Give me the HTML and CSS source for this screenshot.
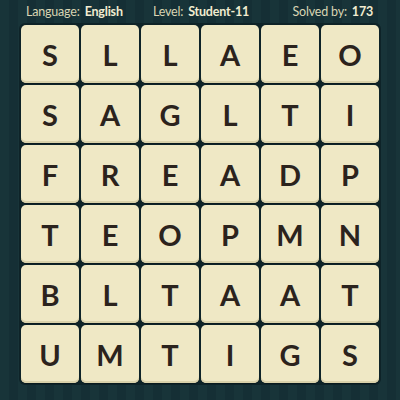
FILE: index.html
```html
<!DOCTYPE html>
<html>
<head>
<meta charset="utf-8">
<link rel="stylesheet" href="styles.css">
</head>
<body>
<div class="page">
  <div class="header">
    <div class="info lang">Language: <b>English</b></div>
    <div class="info level">Level: <b>Student-11</b></div>
    <div class="info solved">Solved by: <b>173</b></div>
  </div>
  <div class="board">
    <div class="tile">S</div><div class="tile">L</div><div class="tile">L</div><div class="tile">A</div><div class="tile">E</div><div class="tile">O</div>
    <div class="tile">S</div><div class="tile">A</div><div class="tile">G</div><div class="tile">L</div><div class="tile">T</div><div class="tile">I</div>
    <div class="tile">F</div><div class="tile">R</div><div class="tile">E</div><div class="tile">A</div><div class="tile">D</div><div class="tile">P</div>
    <div class="tile">T</div><div class="tile">E</div><div class="tile">O</div><div class="tile">P</div><div class="tile">M</div><div class="tile">N</div>
    <div class="tile">B</div><div class="tile">L</div><div class="tile">T</div><div class="tile">A</div><div class="tile">A</div><div class="tile">T</div>
    <div class="tile">U</div><div class="tile">M</div><div class="tile">T</div><div class="tile">I</div><div class="tile">G</div><div class="tile">S</div>
  </div>
</div>
</body>
</html>
```
FILE: styles.css
```css
html, body {
  margin: 0;
  padding: 0;
}
body {
  width: 400px;
  height: 400px;
  overflow: hidden;
  background-color: #173339;
  background-image: repeating-linear-gradient(90deg,
    #183439 0px, #183439 9px,
    #152f35 9px, #152f35 18px);
  font-family: "Lato", "DejaVu Sans", sans-serif;
}
.page {
  display: flex;
  flex-direction: column;
  align-items: center;
}
.header {
  width: 400px;
  height: 23px;
  display: flex;
  align-items: center;
  box-sizing: border-box;
  padding: 0 27px 0 26px;
  color: #d9d5b3;
  font-size: 12.5px;
  letter-spacing: -0.2px;
}
.info b {
  color: #f1ecd0;
  font-weight: 700;
  margin-left: 2px;
}
.lang { width: 127px; }
.level { flex: 1; }
.board {
  display: grid;
  grid-template-columns: repeat(6, 58px);
  grid-auto-rows: 58px;
  gap: 2px;
  padding: 2px;
  background: #0e2328;
  border-radius: 6px;
}
.tile {
  background: #efe8c5;
  border-radius: 5px;
  box-shadow: inset 0 -2px 0 #d9d1aa, 0 1px 0 #0a1b1f;
  display: flex;
  align-items: center;
  justify-content: center;
  color: #2b231d;
  font-size: 29px;
  font-weight: 700;
  padding-top: 1px;
  box-sizing: border-box;
}
```
